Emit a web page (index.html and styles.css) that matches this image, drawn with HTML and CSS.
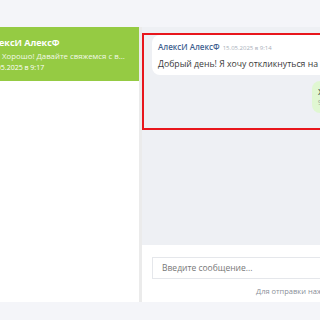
FILE: index.html
```html
<!DOCTYPE html>
<html lang="ru">
<head>
    <meta charset="UTF-8">
    <meta name="viewport" content="width=device-width, initial-scale=1.0">
    <title>Сообщения</title>
    <link rel="stylesheet" href="styles.css">
</head>
<body>

    <!-- Chat layout -->
    <div class="app">
        <aside class="sidebar">
            <div class="dialog active">
                <p class="dialog-name">АлексИ АлексФ</p>
                <p class="dialog-last">Вы: Хорошо! Давайте свяжемся с в...</p>
                <p class="dialog-date">15.05.2025 в 9:17</p>
            </div>
        </aside>

        <section class="chat">
            <div class="messages">
                <div class="thread">
                    <div class="msg msg-in">
                        <p class="msg-head"><span class="msg-author">АлексИ АлексФ</span> <span class="msg-date">15.05.2025 в 9:14</span></p>
                        <p class="msg-text">Добрый день! Я хочу откликнуться на вашу вакансию.</p>
                    </div>
                    <div class="msg msg-out">
                        <p class="msg-text">Хорошо!</p>
                        <p class="msg-time">9:17</p>
                    </div>
                </div>
            </div>

            <div class="composer">
                <input type="text" class="composer-input" placeholder="Введите сообщение...">
                <p class="composer-hint">Для отправки нажмите Enter</p>
            </div>
        </section>
    </div>

</body>
</html>
```

FILE: styles.css
```css
/* Global Styles */
* {
    margin: 0;
    padding: 0;
    box-sizing: border-box;
}

body {
    font-family: 'Open Sans', sans-serif;
    background-color: #f4f5f9;
    color: #333;
    overflow: hidden;
}

.app {
    display: flex;
    margin-top: 27px;
    margin-left: -40px;
    height: 275px;
    width: 411px;
}

/* Sidebar */
.sidebar {
    flex: none;
    width: 182px;
    background-color: #fff;
    border-right: 3px solid #ebebeb;
}

.dialog {
    padding: 9px 10px 0 27px;
    height: 54px;
}

.dialog.active {
    background-color: #95cb43;
    color: #fff;
}

.dialog-name {
    font-size: 9px;
    font-weight: 700;
    line-height: 14px;
}

.dialog-last {
    font-size: 7.8px;
    line-height: 13px;
    color: #f2f8e8;
    white-space: nowrap;
    overflow: hidden;
}

.dialog-date {
    font-size: 7px;
    line-height: 9px;
}

/* Chat */
.chat {
    flex: 1;
    min-width: 0;
    display: flex;
    flex-direction: column;
}

.messages {
    flex: 1;
    background-color: #eef0f4;
    padding-top: 6px;
}

.thread {
    height: 97px;
    border: 2px solid #e8161c;
    padding: 0 8px;
    display: flex;
    flex-direction: column;
    gap: 6px;
    overflow: hidden;
}

.msg {
    border-radius: 8px;
    white-space: nowrap;
    overflow: hidden;
}

.msg-in {
    background-color: #fff;
    padding: 6px 6px 5px;
    max-width: 100%;
}

.msg-out {
    background-color: #e0f7d2;
    align-self: flex-end;
    width: 49px;
    padding: 5px 6px;
}

.msg-head {
    font-size: 8px;
    line-height: 12px;
    margin-bottom: 4px;
}

.msg-author {
    color: #3f5f8f;
    font-weight: 600;
    font-size: 8px;
}

.msg-date {
    color: #aab0ba;
    font-size: 6px;
    margin-left: 1px;
}

.msg-text {
    font-size: 8.7px;
    line-height: 12px;
    color: #3a3a3a;
}

.msg-out .msg-text {
    color: #4d6656;
    font-weight: 600;
}

.msg-time {
    font-size: 6.5px;
    line-height: 10px;
    color: #8d9b90;
}

/* Composer */
.composer {
    height: 57px;
    background-color: #fff;
    padding: 9px 10px 0;
}

.composer-input {
    width: 100%;
    height: 22px;
    border: 1px solid #e5e7eb;
    padding: 0 9px;
    font-family: 'Open Sans', sans-serif;
    font-size: 8.5px;
    color: #333;
    outline: none;
}

.composer-input::placeholder {
    color: #777;
}

.composer-hint {
    margin-top: 7px;
    text-align: right;
    font-size: 7.5px;
    color: #8a8f99;
}
```
